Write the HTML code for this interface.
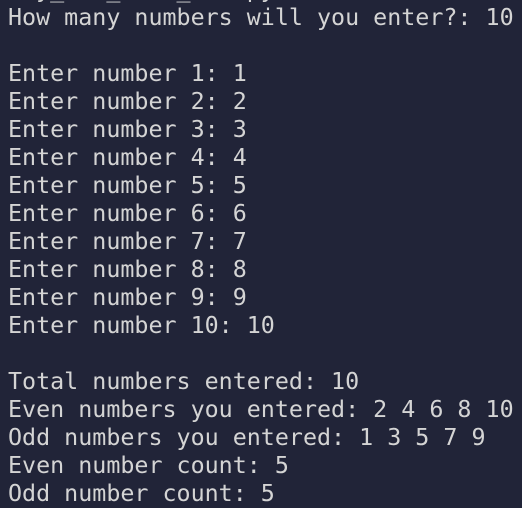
<!DOCTYPE html>
<html><head><meta charset="utf-8"><style>
html,body{margin:0;padding:0;background:#212438;width:522px;height:508px;overflow:hidden}
pre{margin:0;position:absolute;left:8px;top:-25px;font-family:"DejaVu Sans Mono","Liberation Mono",monospace;font-size:23.33px;line-height:28px;color:#d4d4d4;letter-spacing:0}
</style></head><body><pre>ory_odd_even_num.py
How many numbers will you enter?: 10

Enter number 1: 1
Enter number 2: 2
Enter number 3: 3
Enter number 4: 4
Enter number 5: 5
Enter number 6: 6
Enter number 7: 7
Enter number 8: 8
Enter number 9: 9
Enter number 10: 10

Total numbers entered: 10
Even numbers you entered: 2 4 6 8 10
Odd numbers you entered: 1 3 5 7 9
Even number count: 5
Odd number count: 5</pre></body></html>
